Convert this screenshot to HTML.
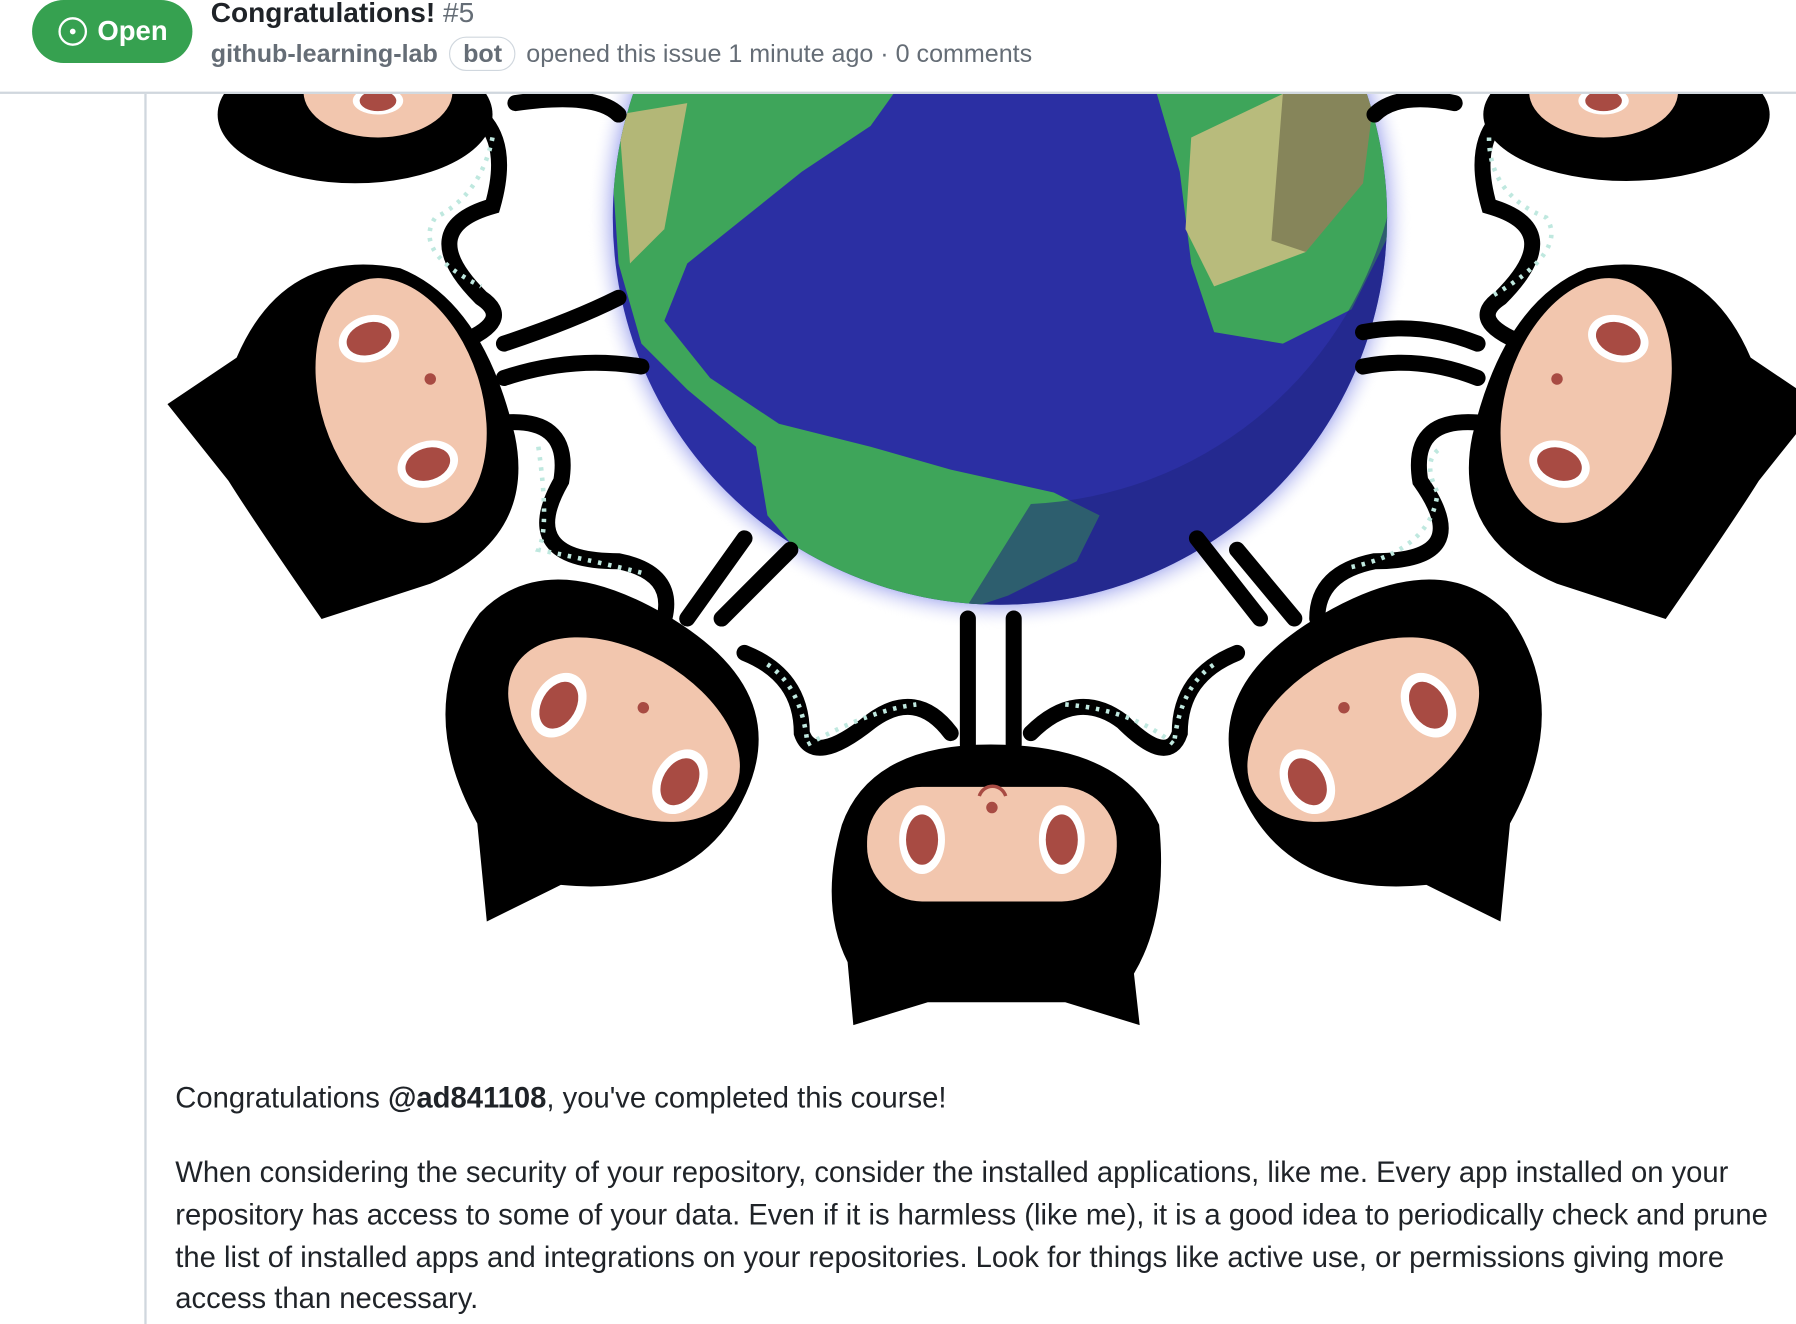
<!DOCTYPE html>
<html><head><meta charset="utf-8">
<style>
html,body{margin:0;padding:0;background:#fff;overflow:hidden;}
body{width:1796px;height:1324px;}
#w{width:1568px;height:1156px;transform:scale(1.14541);transform-origin:0 0;position:relative;font-family:"Liberation Sans",Arial,sans-serif;}
.hdr{position:absolute;left:0;top:0;width:1568px;height:80px;border-bottom:2px solid #d0d7de;background:#fff;}
.open{position:absolute;left:28px;top:0;width:140px;height:55px;border-radius:28px;background:#36a150;color:#fff;font-size:24px;font-weight:bold;}
.open span{position:absolute;left:57px;top:14px;}
.open i{position:absolute;left:23px;top:15px;width:25px;height:25px;border:2.5px solid #fff;border-radius:50%;box-sizing:border-box;}
.open i:after{content:"";position:absolute;left:7.5px;top:7.5px;width:5px;height:5px;border-radius:50%;background:#fff;}
.title{position:absolute;left:184px;top:-2px;font-size:24.5px;font-weight:bold;color:#1f2328;white-space:nowrap;}
.title b{font-weight:normal;color:#656d76;}
.meta{position:absolute;left:184px;top:32px;font-size:21.9px;color:#656d76;white-space:nowrap;}
.meta strong{color:#656d76;}
.bot{display:inline-block;border:1.5px solid #d0d7de;border-radius:15px;padding:1px 11px;margin:0 3px 0 4px;color:#656d76;font-weight:bold;}
.vl{position:absolute;left:126px;top:82px;width:2px;height:1074px;background:#d0d7de;}
.txt{position:absolute;left:153px;font-size:25.5px;color:#1f2328;white-space:nowrap;}
</style></head><body><div id="w">
<svg style="position:absolute;left:0;top:0" width="1568" height="1156" viewBox="0 0 1568 1156">
<defs>
<radialGradient id="gl" cx="873" cy="190" r="360" gradientUnits="userSpaceOnUse">
<stop offset="0.9" stop-color="#5560e0"/><stop offset="1" stop-color="#fff" stop-opacity="0"/></radialGradient>
<clipPath id="cp"><rect x="0" y="82" width="1568" height="1074"/></clipPath>
<clipPath id="gc"><circle cx="873" cy="190" r="338"/></clipPath>
</defs>
<g clip-path="url(#cp)">
<circle cx="873" cy="190" r="362" fill="url(#gl)"/>
<circle cx="873" cy="190" r="338" fill="#2b2fa3"/>
<g clip-path="url(#gc)">
<path d="M530 82 L780 82 L760 110 L700 150 L650 190 L600 230 L580 280 L620 330 L680 370 L760 390 L830 410 L920 430 L960 450 L940 490 L880 520 L820 540 L720 510 L670 450 L660 390 L600 340 L560 300 L540 230 Z" fill="#3ea55a"/>
<path d="M540 100 L600 90 L580 200 L550 230 Z" fill="#b3b777"/>
<path d="M1010 82 L1200 82 L1215 200 L1180 270 L1120 300 L1060 290 L1040 230 L1030 150 Z" fill="#3ea55a"/>
<path d="M1040 120 L1120 82 L1190 82 L1185 150 L1140 220 L1060 250 L1035 200 Z" fill="#b8bb7c"/>
<path d="M1120 82 L1200 82 L1190 160 L1140 220 L1110 210 Z" fill="#86855a"/>
<path d="M900 440 A338 338 0 0 0 1211 190 L1250 190 L1250 600 L800 600 Z" fill="#1f2480" opacity="0.55"/>
</g>
<g fill="none" stroke="#000" stroke-width="14" stroke-linecap="round">
<path d="M400 90 Q450 110 430 180 Q360 200 420 260 Q450 280 400 300"/>
<path d="M450 90 Q520 80 540 100"/>
<path d="M440 300 Q500 280 540 260 M440 330 Q500 310 560 320"/>
<path d="M430 370 Q500 360 490 420 Q450 490 540 490 Q590 500 580 540"/>
<path d="M600 540 L650 470 M630 540 L690 480"/>
<path d="M650 570 Q700 590 700 640 Q710 670 760 630 Q800 600 830 640"/>
<path d="M845 540 L845 650 M885 540 L885 650"/>
<path d="M900 640 Q940 600 980 630 Q1020 670 1030 640 Q1030 590 1080 570"/>
<path d="M1100 540 L1045 470 M1130 540 L1080 480"/>
<path d="M1150 540 Q1150 500 1200 490 Q1290 490 1240 420 Q1230 360 1300 370"/>
<path d="M1190 320 Q1240 310 1290 330 M1190 290 Q1240 280 1290 300"/>
<path d="M1330 300 Q1280 280 1310 260 Q1370 200 1300 180 Q1280 110 1330 90"/>
<path d="M1200 100 Q1220 80 1270 90"/>
</g>
<g fill="none" stroke="#bfe8df" stroke-width="4" stroke-dasharray="3 6">
<path d="M430 120 Q420 170 380 190 Q360 220 420 250"/>
<path d="M470 390 Q480 460 470 480 Q520 490 560 500"/>
<path d="M670 580 Q700 600 705 650 Q760 620 800 615"/>
<path d="M930 615 Q990 620 1025 650 Q1030 600 1060 580"/>
<path d="M1180 495 Q1250 480 1255 430 Q1240 400 1260 390"/>
<path d="M1300 120 Q1300 170 1350 190 Q1370 220 1300 260"/>
</g>
<g>
<ellipse cx="310" cy="100" rx="120" ry="60" fill="#000"/>
<ellipse cx="330" cy="80" rx="65" ry="40" fill="#f2c6ae"/>
<ellipse cx="330" cy="88" rx="22" ry="12" fill="#fff"/><ellipse cx="330" cy="88" rx="16" ry="9" fill="#a84b43"/>
</g>
<g transform="rotate(-18 320 370)">
<path d="M160 300 L230 280 Q300 200 390 250 Q450 300 440 420 Q430 510 330 520 L230 520 Q200 420 190 380 Z" fill="#000"/>
<ellipse cx="355" cy="360" rx="70" ry="110" fill="#f2c6ae"/>
<ellipse cx="345" cy="300" rx="27" ry="20" fill="#fff"/><ellipse cx="345" cy="300" rx="20" ry="14" fill="#a84b43"/>
<ellipse cx="360" cy="420" rx="27" ry="20" fill="#fff"/><ellipse cx="360" cy="420" rx="20" ry="14" fill="#a84b43"/>
<circle cx="385" cy="350" r="5" fill="#a84b43"/>
</g>
<g transform="rotate(30 520 640)">
<path d="M380 600 Q400 520 520 520 Q650 520 660 620 Q670 720 560 770 L520 830 L470 760 Q370 700 380 600 Z" fill="#000"/>
<ellipse cx="540" cy="625" rx="110" ry="68" fill="#f2c6ae"/>
<ellipse cx="480" cy="635" rx="22" ry="30" fill="#fff"/><ellipse cx="480" cy="635" rx="15" ry="22" fill="#a84b43"/>
<ellipse cx="605" cy="640" rx="22" ry="30" fill="#fff"/><ellipse cx="605" cy="640" rx="15" ry="22" fill="#a84b43"/>
<circle cx="545" cy="600" r="5" fill="#a84b43"/>
</g>
<g>
<path d="M735 720 Q760 650 865 650 Q980 650 1012 720 Q1020 800 990 850 L995 895 L930 875 L810 875 L745 895 L740 840 Q715 790 735 720 Z" fill="#000"/>
<rect x="757" y="687" width="218" height="100" rx="48" fill="#f2c6ae"/>
<ellipse cx="805" cy="733" rx="20" ry="30" fill="#fff"/><ellipse cx="805" cy="733" rx="14" ry="22" fill="#a84b43"/>
<ellipse cx="927" cy="733" rx="20" ry="30" fill="#fff"/><ellipse cx="927" cy="733" rx="14" ry="22" fill="#a84b43"/>
<circle cx="866" cy="705" r="5" fill="#a84b43"/>
<path d="M855 695 A12 12 0 0 1 878 695" stroke="#a84b43" stroke-width="3" fill="none"/>
</g>
<g transform="translate(1735 0) scale(-1 1) rotate(30 520 640)">
<path d="M380 600 Q400 520 520 520 Q650 520 660 620 Q670 720 560 770 L520 830 L470 760 Q370 700 380 600 Z" fill="#000"/>
<ellipse cx="540" cy="625" rx="110" ry="68" fill="#f2c6ae"/>
<ellipse cx="480" cy="635" rx="22" ry="30" fill="#fff"/><ellipse cx="480" cy="635" rx="15" ry="22" fill="#a84b43"/>
<ellipse cx="605" cy="640" rx="22" ry="30" fill="#fff"/><ellipse cx="605" cy="640" rx="15" ry="22" fill="#a84b43"/>
<circle cx="545" cy="600" r="5" fill="#a84b43"/>
</g>
<g transform="translate(1735 0) scale(-1 1) rotate(-18 320 370)">
<path d="M160 300 L230 280 Q300 200 390 250 Q450 300 440 420 Q430 510 330 520 L230 520 Q200 420 190 380 Z" fill="#000"/>
<ellipse cx="355" cy="360" rx="70" ry="110" fill="#f2c6ae"/>
<ellipse cx="345" cy="300" rx="27" ry="20" fill="#fff"/><ellipse cx="345" cy="300" rx="20" ry="14" fill="#a84b43"/>
<ellipse cx="360" cy="420" rx="27" ry="20" fill="#fff"/><ellipse cx="360" cy="420" rx="20" ry="14" fill="#a84b43"/>
<circle cx="385" cy="350" r="5" fill="#a84b43"/>
</g>
<g>
<ellipse cx="1420" cy="100" rx="125" ry="58" fill="#000"/>
<ellipse cx="1400" cy="80" rx="65" ry="40" fill="#f2c6ae"/>
<ellipse cx="1400" cy="88" rx="22" ry="12" fill="#fff"/><ellipse cx="1400" cy="88" rx="16" ry="9" fill="#a84b43"/>
</g>
</g>
</svg>
<div class="hdr">
<div class="open"><i></i><span>Open</span></div>
<div class="title">Congratulations! <b>#5</b></div>
<div class="meta"><strong>github-learning-lab</strong> <span class="bot">bot</span> opened this issue 1 minute ago · 0 comments</div>
</div>
<div class="vl"></div>
<div class="txt" style="top:945px">Congratulations <b>@ad841108</b>, you've completed this course!</div>
<div class="txt" style="top:1010px">When considering the security of your repository, consider the installed applications, like me. Every app installed on your</div>
<div class="txt" style="top:1047px">repository has access to some of your data. Even if it is harmless (like me), it is a good idea to periodically check and prune</div>
<div class="txt" style="top:1084px">the list of installed apps and integrations on your repositories. Look for things like active use, or permissions giving more</div>
<div class="txt" style="top:1120px">access than necessary.</div>
</div></body></html>
